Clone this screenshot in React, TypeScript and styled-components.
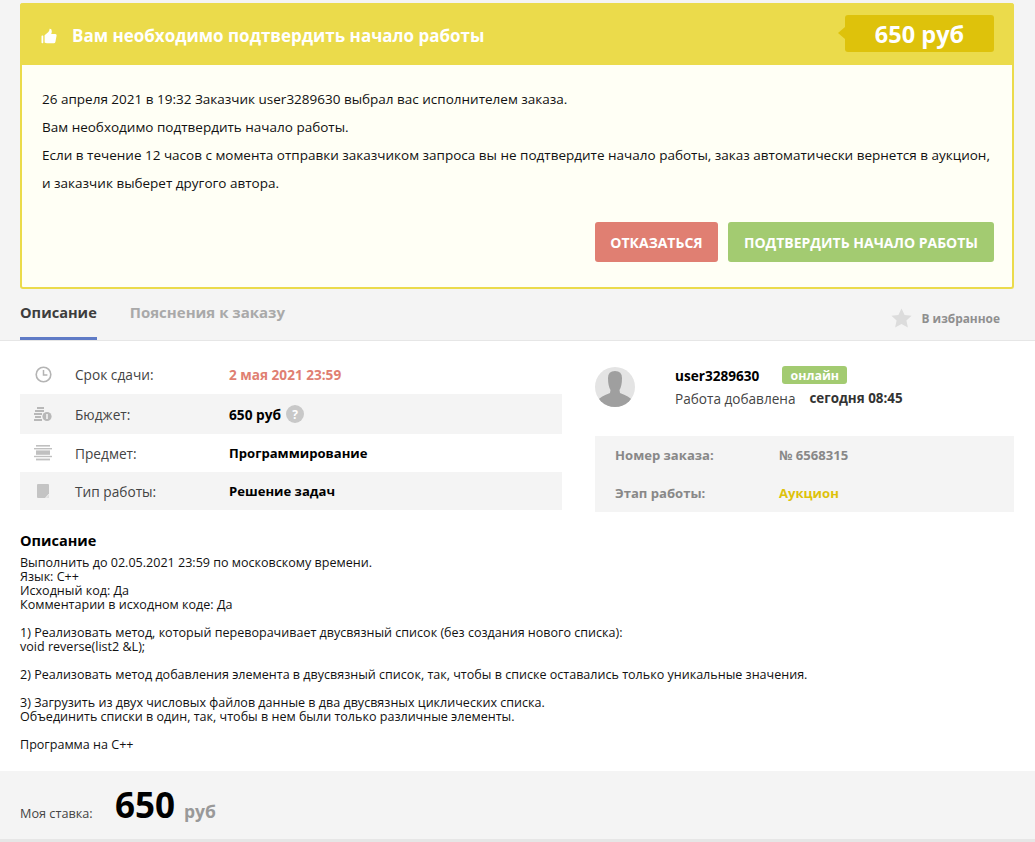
import styled, { createGlobalStyle } from "styled-components";

const GlobalStyle = createGlobalStyle`
    html, body {
        margin: 0;
        padding: 0;
        background: #ffffff;
    }
    body {
        font-family: "Open Sans", "Noto Sans", sans-serif;
        color: #000;
    }
`;

const Page = styled.div`
    width: 1035px;
    height: 842px;
    overflow: hidden;
`;

const TopArea = styled.div`
    background: #f4f4f4;
    padding: 3px 21px 0 20px;
`;

const Notice = styled.div`
    border: 2px solid #ebdb4b;
    border-top: 0;
    border-radius: 3px;
    background: #fffff5;
    height: 284px;
`;

const NoticeHead = styled.div`
    display: flex;
    align-items: center;
    justify-content: space-between;
    height: 62px;
    margin: 0 -2px;
    padding: 0 20px 0 21px;
    background: #ebdb4b;
    border-radius: 3px 3px 0 0;
`;

const NoticeTitle = styled.div`
    display: flex;
    align-items: center;
    gap: 15px;
    margin-top: 3px;
    color: #fff;
    font-size: 17px;
    font-weight: 700;
`;

const PriceTag = styled.div`
    position: relative;
    display: flex;
    align-items: center;
    justify-content: center;
    width: 149px;
    height: 37px;
    margin-top: -1px;
    background: #dec20b;
    border-radius: 3px;
    color: #fff;
    font-size: 23.5px;
    font-weight: 700;

    &::before {
        content: "";
        position: absolute;
        left: -7px;
        top: 12px;
        border-style: solid;
        border-width: 6.5px 7px 6.5px 0;
        border-color: transparent #dec20b transparent transparent;
    }
`;

const NoticeBody = styled.div`
    padding: 20px 20px 0;
    font-size: 13.5px;
    line-height: 28px;
    color: #111;
`;

const NoticeLine = styled.div`
    white-space: nowrap;
`;

const Actions = styled.div`
    display: flex;
    justify-content: flex-end;
    gap: 10px;
    margin-top: 25px;
    padding-right: 18px;
`;

const ActionButton = styled.div<{ $color: string; $width: number }>`
    display: flex;
    align-items: center;
    justify-content: center;
    height: 40px;
    width: ${(p) => p.$width}px;
    background: ${(p) => p.$color};
    border-radius: 3px;
    color: #fff;
    font-size: 14px;
    font-weight: 700;
`;

const TabsBar = styled.div`
    display: flex;
    align-items: stretch;
    height: 52px;
    padding: 0 35px 0 20px;
    background: #f4f4f4;
    border-bottom: 1px solid #e6e6e6;
    box-sizing: border-box;
`;

const Tab = styled.div<{ $active?: boolean }>`
    display: flex;
    align-items: center;
    height: 51px;
    box-sizing: border-box;
    margin-right: 33px;
    padding-bottom: 3px;
    font-size: ${(p) => (p.$active ? "14.6px" : "15px")};
    font-weight: 700;
    color: ${(p) => (p.$active ? "#3d3d3d" : "#a9a9a9")};
    border-bottom: 3px solid ${(p) => (p.$active ? "#5f7bc6" : "transparent")};
`;

const Favorite = styled.div`
    display: flex;
    align-items: center;
    gap: 10px;
    margin-left: auto;
    margin-top: 6px;
    font-size: 11.9px;
    font-weight: 700;
    color: #8f8f8f;
`;

const InfoColumns = styled.div`
    display: flex;
    justify-content: space-between;
    padding: 14px 21px 0 20px;
`;

const InfoTable = styled.div`
    width: 542px;
`;

const InfoRow = styled.div<{ $shaded?: boolean; $height: number }>`
    display: flex;
    align-items: center;
    height: ${(p) => p.$height}px;
    background: ${(p) => (p.$shaded ? "#f4f4f4" : "transparent")};
    font-size: 13px;
`;

const IconCell = styled.div`
    display: flex;
    justify-content: center;
    width: 46px;
    margin-right: 9px;
`;

const RowLabel = styled.div`
    width: 154px;
    font-size: 13.7px;
    color: #444;
`;

const RowValue = styled.div<{ $color?: string; $size?: number }>`
    display: flex;
    align-items: center;
    gap: 5px;
    font-size: ${(p) => p.$size || 13.1}px;
    font-weight: 700;
    color: ${(p) => p.$color || "#000"};
`;

const HelpMark = styled.span`
    display: flex;
    align-items: center;
    justify-content: center;
    width: 18px;
    height: 18px;
    border-radius: 50%;
    background: #c8c8c8;
    color: #fff;
    font-size: 12px;
    font-weight: 700;
`;

const SideColumn = styled.div`
    width: 419px;
`;

const Author = styled.div`
    display: flex;
    height: 81px;
    padding-top: 11px;
    box-sizing: border-box;
`;

const Avatar = styled.div`
    width: 40px;
    height: 40px;
    margin: 1px 40px 0 0;
    border-radius: 50%;
    overflow: hidden;
`;

const AuthorLines = styled.div`
    display: flex;
    flex-direction: column;
    gap: 5px;
    font-size: 13.6px;
`;

const AuthorTop = styled.div`
    display: flex;
    align-items: center;
    gap: 23px;
    height: 18px;
    font-weight: 700;
`;

const OnlineBadge = styled.span`
    display: flex;
    align-items: center;
    justify-content: center;
    width: 65px;
    height: 18px;
    border-radius: 3px;
    background: #a3cb71;
    color: #fff;
    font-size: 12.4px;
`;

const AddedLine = styled.div`
    display: flex;
    gap: 14px;
    color: #444;
`;

const AddedTime = styled.b`
    font-size: 13.4px;
    color: #333;
`;

const OrderBox = styled.div`
    height: 76px;
    background: #f4f4f4;
    padding: 0 20px;
    font-size: 13.1px;
    font-weight: 700;
`;

const OrderRow = styled.div`
    display: flex;
    align-items: center;
    height: 38px;
`;

const OrderLabel = styled.div`
    width: 164px;
    color: #888;
`;

const OrderValue = styled.div<{ $color: string }>`
    color: ${(p) => p.$color};
`;

const Description = styled.div`
    padding: 18px 20px 0;
    height: 259px;
    box-sizing: border-box;
`;

const DescTitle = styled.div`
    margin-bottom: 4px;
    font-size: 14.5px;
    font-weight: 700;
    line-height: 22px;
`;

const DescText = styled.div`
    font-size: 12.55px;
    line-height: 14px;
    color: #111;
    white-space: pre-line;
`;

const BidBar = styled.div`
    display: flex;
    align-items: baseline;
    height: 71px;
    padding: 12px 20px 0;
    box-sizing: border-box;
    background: #f4f4f4;
    border-bottom: 3px solid #e6e6e6;
`;

const BidLabel = styled.div`
    width: 95px;
    font-size: 12.7px;
    color: #444;
`;

const BidValue = styled.div`
    font-size: 35px;
    font-weight: 700;
    line-height: 44px;
`;

const BidUnit = styled.div`
    margin-left: 9px;
    font-size: 17.5px;
    font-weight: 700;
    color: #999;
`;

const description = `Выполнить до 02.05.2021 23:59 по московскому времени.
Язык: C++
Исходный код: Да
Комментарии в исходном коде: Да

1) Реализовать метод, который переворачивает двусвязный список (без создания нового списка):
void reverse(list2 &L);

2) Реализовать метод добавления элемента в двусвязный список, так, чтобы в списке оставались только уникальные значения.

3) Загрузить из двух числовых файлов данные в два двусвязных циклических списка.
Объединить списки в один, так, чтобы в нем были только различные элементы.

Программа на C++`;

function ThumbIcon() {
    return (
        <svg width="16" height="16" viewBox="0 0 16 16" fill="#fff">
            <rect x="0.5" y="7.4" width="1.8" height="7.8" rx="0.7" />
            <path d="M3.6 7.2 L7.4 4 Q8.6 2.8 8.6 0.8 Q10.8 0.6 10.8 3.2 Q10.8 4.6 10.2 6 L14.4 6 Q15.8 6.2 15.6 7.6 L14.4 14 Q14.1 15.2 12.8 15.2 L6 15.2 Q4.6 15.2 3.6 14.4 Z" />
        </svg>
    );
}

function StarIcon() {
    return (
        <svg width="21" height="20" viewBox="0 0 21 20" fill="#dcdcdc">
            <path d="M10.5 0.5 L13.6 7 L20.6 7.7 L15.4 12.5 L16.9 19.5 L10.5 15.9 L4.1 19.5 L5.6 12.5 L0.4 7.7 L7.4 7 Z" />
        </svg>
    );
}

function ClockIcon() {
    return (
        <svg width="17" height="17" viewBox="0 0 17 17" fill="none" stroke="#b4b4b4">
            <circle cx="8.5" cy="8.5" r="7.3" strokeWidth="1.6" />
            <path d="M8.5 4 V9 H12.4" strokeWidth="1.5" />
        </svg>
    );
}

function CoinsIcon() {
    return (
        <svg width="18" height="15" viewBox="0 0 18 15" fill="#b8b8b8">
            <rect x="3" y="0" width="7" height="2" />
            <rect x="1" y="3" width="9" height="2" />
            <rect x="0" y="6" width="8" height="2" />
            <rect x="1" y="9" width="6" height="2" />
            <rect x="0" y="12" width="8" height="2" />
            <circle cx="13" cy="9.5" r="4.6" />
            <rect x="12.2" y="7" width="1.6" height="5" fill="#f4f4f4" />
        </svg>
    );
}

function SubjectIcon() {
    return (
        <svg width="18" height="16" viewBox="0 0 18 16" fill="#c0c0c0">
            <rect x="2" y="0" width="14" height="1.6" />
            <rect x="0" y="3" width="18" height="1.4" />
            <rect x="2" y="5.4" width="14" height="4.4" />
            <rect x="0" y="10.8" width="18" height="1.4" />
            <rect x="2" y="13.6" width="14" height="1.8" />
        </svg>
    );
}

function PaperIcon() {
    return (
        <svg width="12" height="14" viewBox="0 0 12 14" fill="#c4c4c4">
            <path d="M1 0 H11 Q12 0 12 1 V9.5 L8 14 H1 Q0 14 0 13 V1 Q0 0 1 0 Z" />
            <path d="M12 10.5 L9 14 H12 Z" fill="#e0e0e0" />
        </svg>
    );
}

function AvatarImage() {
    return (
        <svg width="40" height="40" viewBox="0 0 40 40">
            <rect width="40" height="40" fill="#e4e4e4" />
            <path d="M13 11 Q13 4 20 4 Q27 4 27 11 Q27 19 24.5 23 L25 26 Q34 29 38 34 L38 40 L2 40 L2 34 Q6 29 15 26 L15.5 23 Q13 19 13 11 Z" fill="#9f9f9f" />
        </svg>
    );
}

export default function App() {
    return (
        <Page>
            <GlobalStyle />
            <TopArea>
                <Notice>
                    <NoticeHead>
                        <NoticeTitle>
                            <ThumbIcon />
                            Вам необходимо подтвердить начало работы
                        </NoticeTitle>
                        <PriceTag>650 руб</PriceTag>
                    </NoticeHead>
                    <NoticeBody>
                        <NoticeLine>
                            26 апреля 2021 в 19:32 Заказчик user3289630 выбрал вас исполнителем заказа.
                        </NoticeLine>
                        <NoticeLine>Вам необходимо подтвердить начало работы.</NoticeLine>
                        <NoticeLine>
                            Если в течение 12 часов с момента отправки заказчиком запроса вы не подтвердите начало работы, заказ автоматически вернется в аукцион,
                        </NoticeLine>
                        <NoticeLine>и заказчик выберет другого автора.</NoticeLine>
                    </NoticeBody>
                    <Actions>
                        <ActionButton $color="#e07f72" $width={123}>ОТКАЗАТЬСЯ</ActionButton>
                        <ActionButton $color="#a3cb71" $width={266}>ПОДТВЕРДИТЬ НАЧАЛО РАБОТЫ</ActionButton>
                    </Actions>
                </Notice>
            </TopArea>
            <TabsBar>
                <Tab $active>Описание</Tab>
                <Tab>Пояснения к заказу</Tab>
                <Favorite>
                    <StarIcon />
                    В избранное
                </Favorite>
            </TabsBar>
            <InfoColumns>
                <InfoTable>
                    <InfoRow $height={39}>
                        <IconCell><ClockIcon /></IconCell>
                        <RowLabel>Срок сдачи:</RowLabel>
                        <RowValue $color="#e07f72" $size={13.6}>2 мая 2021 23:59</RowValue>
                    </InfoRow>
                    <InfoRow $shaded $height={40}>
                        <IconCell><CoinsIcon /></IconCell>
                        <RowLabel>Бюджет:</RowLabel>
                        <RowValue $size={13.7}>650 руб <HelpMark>?</HelpMark></RowValue>
                    </InfoRow>
                    <InfoRow $height={38}>
                        <IconCell><SubjectIcon /></IconCell>
                        <RowLabel>Предмет:</RowLabel>
                        <RowValue>Программирование</RowValue>
                    </InfoRow>
                    <InfoRow $shaded $height={38}>
                        <IconCell><PaperIcon /></IconCell>
                        <RowLabel>Тип работы:</RowLabel>
                        <RowValue>Решение задач</RowValue>
                    </InfoRow>
                </InfoTable>
                <SideColumn>
                    <Author>
                        <Avatar><AvatarImage /></Avatar>
                        <AuthorLines>
                            <AuthorTop>
                                user3289630
                                <OnlineBadge>онлайн</OnlineBadge>
                            </AuthorTop>
                            <AddedLine>
                                Работа добавлена
                                <AddedTime>сегодня 08:45</AddedTime>
                            </AddedLine>
                        </AuthorLines>
                    </Author>
                    <OrderBox>
                        <OrderRow>
                            <OrderLabel>Номер заказа:</OrderLabel>
                            <OrderValue $color="#888">№ 6568315</OrderValue>
                        </OrderRow>
                        <OrderRow>
                            <OrderLabel>Этап работы:</OrderLabel>
                            <OrderValue $color="#dec20b">Аукцион</OrderValue>
                        </OrderRow>
                    </OrderBox>
                </SideColumn>
            </InfoColumns>
            <Description>
                <DescTitle>Описание</DescTitle>
                <DescText>{description}</DescText>
            </Description>
            <BidBar>
                <BidLabel>Моя ставка:</BidLabel>
                <BidValue>650</BidValue>
                <BidUnit>руб</BidUnit>
            </BidBar>
        </Page>
    );
}
